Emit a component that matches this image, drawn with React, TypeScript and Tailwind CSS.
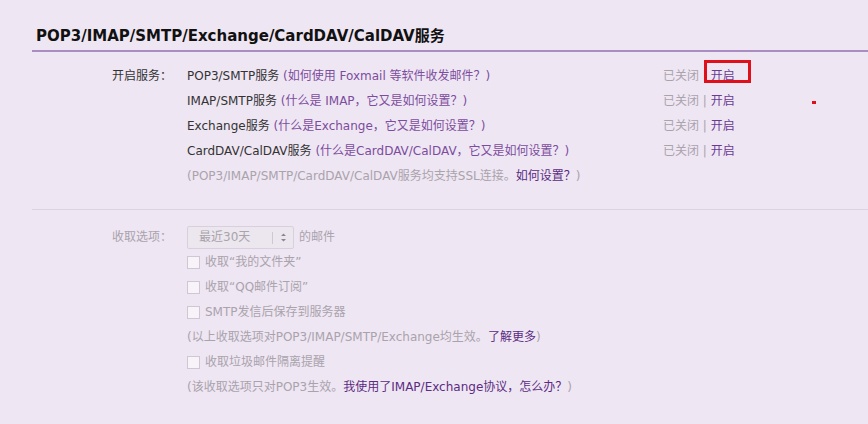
import React from 'react';

const font = { fontFamily: '"DejaVu Sans", Verdana, "Noto Sans CJK SC", sans-serif' };

const services = [
    { name: 'POP3/SMTP服务', help: '如何使用 Foxmail 等软件收发邮件？', boxed: true },
    { name: 'IMAP/SMTP服务', help: '什么是 IMAP，它又是如何设置？' },
    { name: 'Exchange服务', help: '什么是Exchange，它又是如何设置？' },
    { name: 'CardDAV/CalDAV服务', help: '什么是CardDAV/CalDAV，它又是如何设置？' },
];

function Checkbox({ label }: { label: string }) {
    return (
        <label className="flex items-center h-[25px] gap-[5px]">
            <span className="w-[13px] h-[13px] border border-[#cfc7d3] bg-[#f7f3f8] block" />
            <span>{label}</span>
        </label>
    );
}

export default function App() {
    return (
        <div
            className="relative w-[868px] h-[424px] overflow-hidden bg-[#efe6f3] pl-[32px] text-[12px] text-[#333]"
            style={font}
        >
            {/* Heading */}
            <div className="pt-[26px]">
                <div className="h-[26px] leading-[20px] pl-[4px] border-b-2 border-[#a98dc3] text-[15px] font-bold text-[#111]">
                    POP3/IMAP/SMTP/Exchange/CardDAV/CalDAV服务
                </div>
            </div>

            {/* Services */}
            <div className="flex mt-[12px] leading-[25px]">
                <div className="w-[155px] pl-[80px] shrink-0">开启服务：</div>
                <div className="flex flex-col">
                    {services.map((s) => (
                        <div key={s.name} className="flex h-[25px]">
                            <div className="w-[476px]">
                                {s.name}{' '}
                                <span className="text-[#7c4d9e]">({s.help})</span>
                            </div>
                            <div className="text-[#a9a3ac]">
                                已关闭 <span>|</span>{' '}
                                <span className="relative text-[#6a3a94]">
                                    开启
                                    {s.boxed && (
                                        <span className="absolute left-[-7px] top-[-9px] w-[47px] h-[23px] border-[3px] border-[#e0101a]" />
                                    )}
                                </span>
                            </div>
                        </div>
                    ))}
                    <div className="h-[25px] text-[#a9a3ac]">
                        (POP3/IMAP/SMTP/CardDAV/CalDAV服务均支持SSL连接。
                        <span className="text-[#5b2c82]">如何设置？</span>)
                    </div>
                </div>
            </div>

            <div className="mt-[20px] border-t border-[#dcd2e2]" />

            {/* Receive options */}
            <div className="flex mt-[15px] leading-[25px] text-[#a9a3ac]">
                <div className="w-[155px] pl-[80px] shrink-0">收取选项：</div>
                <div className="flex flex-col">
                    <div className="flex items-center h-[25px] gap-[5px]">
                        <div className="flex items-center w-[107px] h-[23px] border border-[#d8d0dc] bg-[#ece7ee] rounded-[2px]">
                            <span className="pl-[11px] w-[84px] leading-[21px]">最近30天</span>
                            <span className="w-px h-[12px] bg-[#cfc7d3]" />
                            <span className="flex-1 flex justify-center">
                                <svg width="7" height="9" viewBox="0 0 7 9">
                                    <path d="M3.5 0.5 L6 3 H1 Z M3.5 8.5 L6 6 H1 Z" fill="#8d8690" />
                                </svg>
                            </span>
                        </div>
                        <span>的邮件</span>
                    </div>
                    <Checkbox label="收取“我的文件夹”" />
                    <Checkbox label="收取“QQ邮件订阅”" />
                    <Checkbox label="SMTP发信后保存到服务器" />
                    <div className="h-[25px]">
                        (以上收取选项对POP3/IMAP/SMTP/Exchange均生效。
                        <span className="text-[#5b2c82]">了解更多</span>)
                    </div>
                    <Checkbox label="收取垃圾邮件隔离提醒" />
                    <div className="h-[25px]">
                        (该收取选项只对POP3生效。
                        <span className="text-[#5b2c82]">我使用了IMAP/Exchange协议，怎么办？</span>)
                    </div>
                </div>
            </div>

            {/* stray red mark */}
            <span className="absolute left-[812px] top-[101px] w-[4px] h-[3px] bg-[#e0101a]" />
        </div>
    );
}
